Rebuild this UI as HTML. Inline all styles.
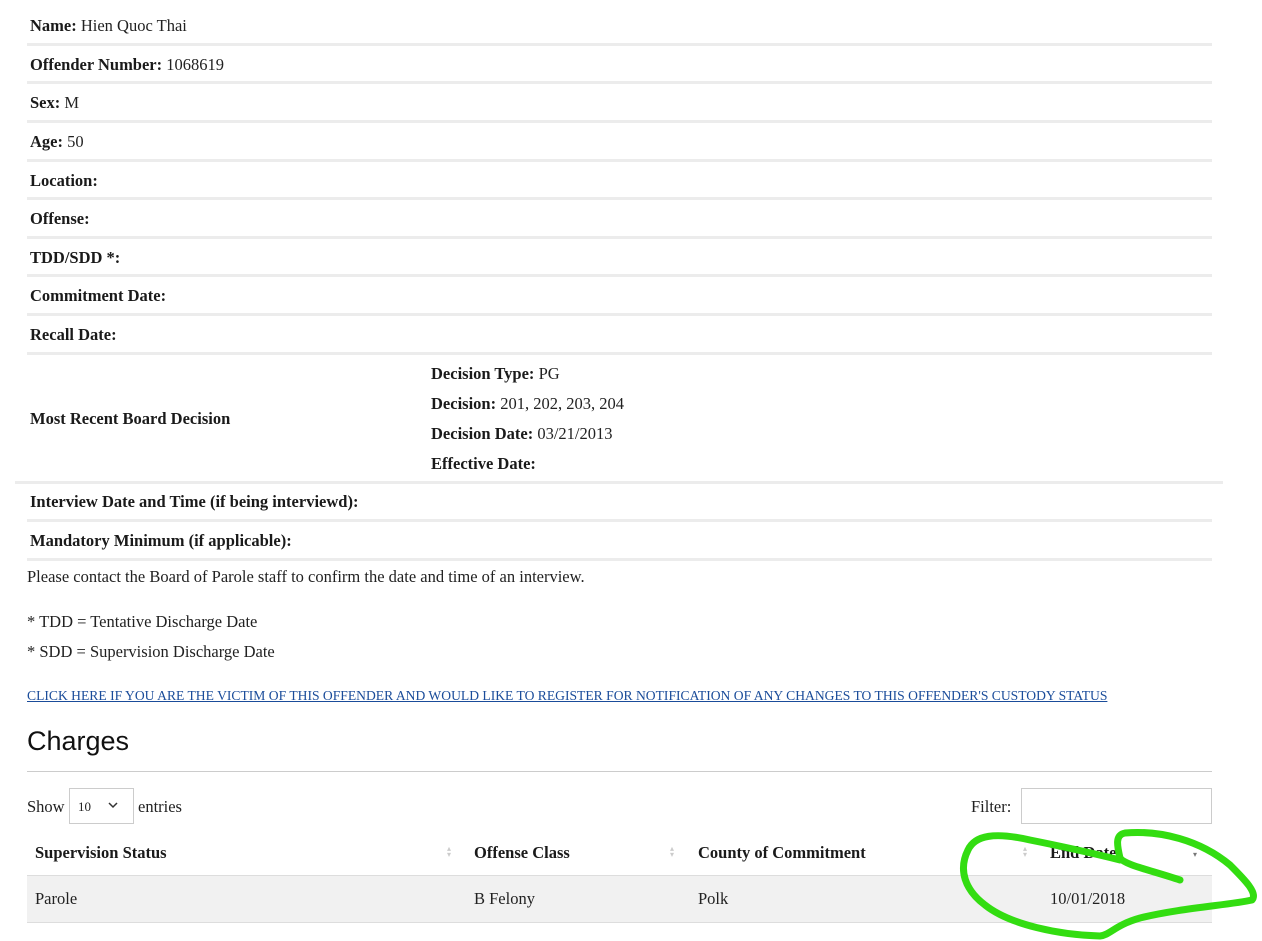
<!DOCTYPE html>
<html><head><meta charset="utf-8"><style>
body{margin:0;width:1262px;height:941px;background:#fff;position:relative;overflow:hidden;font-family:"Liberation Serif",serif;color:#222;font-size:16.5px}
.t{position:absolute;white-space:nowrap}
.sep{position:absolute;left:27px;width:1185px;height:3px;background:#ececec}
b{font-weight:bold;color:#1a1a1a}
a{color:#1a4c9a}
.sa{position:absolute;color:#ccc;font-size:8px;line-height:6px}
</style></head><body>
<div class="t" style="left:30px;top:16px"><b>Name:</b> Hien Quoc Thai</div>
<div class="sep" style="top:43px"></div>
<div class="t" style="left:30px;top:55px"><b>Offender Number:</b> 1068619</div>
<div class="sep" style="top:81px"></div>
<div class="t" style="left:30px;top:93px"><b>Sex:</b> M</div>
<div class="sep" style="top:120px"></div>
<div class="t" style="left:30px;top:132px"><b>Age:</b> 50</div>
<div class="sep" style="top:159px"></div>
<div class="t" style="left:30px;top:171px"><b>Location:</b></div>
<div class="sep" style="top:197px"></div>
<div class="t" style="left:30px;top:209px"><b>Offense:</b></div>
<div class="sep" style="top:236px"></div>
<div class="t" style="left:30px;top:248px"><b>TDD/SDD *:</b></div>
<div class="sep" style="top:274px"></div>
<div class="t" style="left:30px;top:286px"><b>Commitment Date:</b></div>
<div class="sep" style="top:313px"></div>
<div class="t" style="left:30px;top:325px"><b>Recall Date:</b></div>
<div class="sep" style="top:352px"></div>
<div class="t" style="left:30px;top:409px"><b>Most Recent Board Decision</b></div>
<div class="t" style="left:431px;top:364px"><b>Decision Type:</b> PG</div>
<div class="t" style="left:431px;top:394px"><b>Decision:</b> 201, 202, 203, 204</div>
<div class="t" style="left:431px;top:424px"><b>Decision Date:</b> 03/21/2013</div>
<div class="t" style="left:431px;top:454px"><b>Effective Date:</b></div>
<div class="sep" style="top:481px;left:15px;width:1208px"></div>
<div class="t" style="left:30px;top:492px"><b>Interview Date and Time (if being interviewd):</b></div>
<div class="sep" style="top:519px"></div>
<div class="t" style="left:30px;top:531px"><b>Mandatory Minimum (if applicable):</b></div>
<div class="sep" style="top:558px"></div>
<div class="t" style="left:27px;top:567px">Please contact the Board of Parole staff to confirm the date and time of an interview.</div>
<div class="t" style="left:27px;top:612px">* TDD = Tentative Discharge Date</div>
<div class="t" style="left:27px;top:642px">* SDD = Supervision Discharge Date</div>
<div class="t" style="left:27px;top:688px;font-size:13.6px"><a href="#">CLICK HERE IF YOU ARE THE VICTIM OF THIS OFFENDER AND WOULD LIKE TO REGISTER FOR NOTIFICATION OF ANY CHANGES TO THIS OFFENDER'S CUSTODY STATUS</a></div>
<div class="t" style="left:27px;top:726px;font-family:'Liberation Sans',sans-serif;font-size:27px;color:#111">Charges</div>
<div style="position:absolute;left:27px;top:771px;width:1185px;height:1px;background:#ccc"></div>
<div class="t" style="left:27px;top:797px">Show</div>
<div style="position:absolute;left:69px;top:788px;width:65px;height:36px;border:1px solid #ccc;box-sizing:border-box"></div>
<div class="t" style="left:78px;top:799px;font-size:13px">10</div>
<svg style="position:absolute;left:107px;top:801px" width="12" height="8"><path d="M2 2 L6 6 L10 2" stroke="#333" stroke-width="1.5" fill="none"/></svg>
<div class="t" style="left:138px;top:797px">entries</div>
<div class="t" style="left:971px;top:797px">Filter:</div>
<div style="position:absolute;left:1021px;top:788px;width:191px;height:36px;border:1px solid #ccc;box-sizing:border-box"></div>
<div class="t" style="left:35px;top:843px"><b>Supervision Status</b></div>
<div class="t" style="left:474px;top:843px"><b>Offense Class</b></div>
<div class="t" style="left:698px;top:843px"><b>County of Commitment</b></div>
<div class="t" style="left:1050px;top:843px"><b>End Date</b></div>
<div class="sa" style="left:447px;top:846px">▴<br>▾</div>
<div class="sa" style="left:670px;top:846px">▴<br>▾</div>
<div class="sa" style="left:1023px;top:846px">▴<br>▾</div>
<div class="sa" style="left:1193px;top:852px;color:#777">▾</div>
<div style="position:absolute;left:27px;top:875px;width:1185px;height:46px;background:#f1f1f1;border-top:1px solid #ddd;border-bottom:1px solid #ddd"></div>
<div class="t" style="left:35px;top:889px">Parole</div>
<div class="t" style="left:474px;top:889px">B Felony</div>
<div class="t" style="left:698px;top:889px">Polk</div>
<div class="t" style="left:1050px;top:889px">10/01/2018</div>
<svg style="position:absolute;left:0;top:0" width="1262" height="941"><path d="M1180 880 C1150 870 1125 865 1120 858 C1117 845 1115 835 1125 833 C1160 830 1200 840 1230 865 C1245 880 1258 893 1252 900 C1230 905 1180 908 1140 918 C1115 925 1110 935 1100 936 C1060 935 1010 925 985 905 C965 890 958 870 968 850 C975 835 995 832 1030 840 C1070 848 1100 855 1120 860" stroke="#33dd11" stroke-width="7" fill="none" stroke-linecap="round" stroke-linejoin="round"/></svg>
</body></html>
